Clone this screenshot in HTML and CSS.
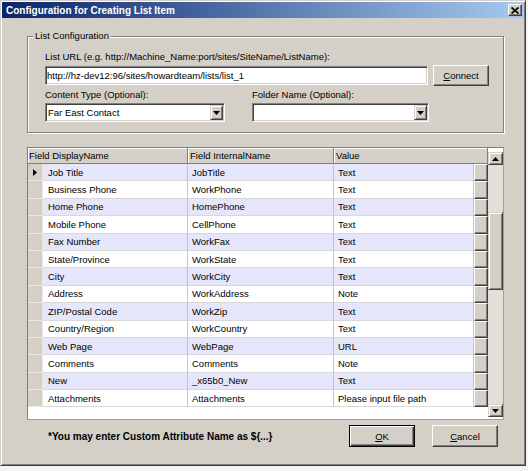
FILE: index.html
```html
<!DOCTYPE html>
<html lang="en">
<head>
    <meta charset="UTF-8">
    <meta name="viewport" content="width=device-width, initial-scale=1.0">
    <title>Configuration for Creating List Item</title>
    <link rel="stylesheet" href="styles.css">
</head>
<body>
    <div class="window">
        <div class="titlebar">
            <span class="title">Configuration for Creating List Item</span>
            <button class="close-btn">
                <svg width="8" height="7" viewBox="0 0 8 7"><path d="M0.5 0.5L7.5 6.5M7.5 0.5L0.5 6.5" stroke="#000" stroke-width="1.7"/></svg>
            </button>
        </div>

        <div class="client">
            <div class="group">
                <div class="group-title">List Configuration</div>
                <div class="label url-label">List URL (e.g. http://Machine_Name:port/sites/SiteName/ListName):</div>
                <div class="url-row">
                    <div class="textbox url-box">http://hz-dev12:96/sites/howardteam/lists/list_1</div>
                    <button class="btn connect-btn"><u>C</u>onnect</button>
                </div>
                <div class="combo-row">
                    <div class="combo-field content-type">
                        <div class="label">Content Type (Optional):</div>
                        <div class="combo">
                            <span class="combo-text">Far East Contact</span>
                            <span class="drop-btn"><svg width="7" height="4" viewBox="0 0 7 4"><path d="M0 0H7L3.5 4Z" fill="#000"/></svg></span>
                        </div>
                    </div>
                    <div class="combo-field folder-name">
                        <div class="label">Folder Name (Optional):</div>
                        <div class="combo">
                            <span class="combo-text"></span>
                            <span class="drop-btn"><svg width="7" height="4" viewBox="0 0 7 4"><path d="M0 0H7L3.5 4Z" fill="#000"/></svg></span>
                        </div>
                    </div>
                </div>
            </div>

            <div class="grid">
                <div class="grid-body">
                    <div class="grid-head">
                        <div class="head-cell">Field DisplayName</div>
                        <div class="head-cell">Field InternalName</div>
                        <div class="head-cell">Value</div>
                    </div>
                    <div class="grid-row alt">
                        <div class="row-head current"><svg width="4" height="7" viewBox="0 0 4 7"><path d="M0 0L4 3.5L0 7Z" fill="#000"/></svg></div>
                        <div class="cell name">Job Title</div><div class="cell">JobTitle</div><div class="cell">Text</div><div class="row-btn"></div>
                    </div>
                    <div class="grid-row">
                        <div class="row-head"></div>
                        <div class="cell name">Business Phone</div><div class="cell">WorkPhone</div><div class="cell">Text</div><div class="row-btn"></div>
                    </div>
                    <div class="grid-row alt">
                        <div class="row-head"></div>
                        <div class="cell name">Home Phone</div><div class="cell">HomePhone</div><div class="cell">Text</div><div class="row-btn"></div>
                    </div>
                    <div class="grid-row">
                        <div class="row-head"></div>
                        <div class="cell name">Mobile Phone</div><div class="cell">CellPhone</div><div class="cell">Text</div><div class="row-btn"></div>
                    </div>
                    <div class="grid-row alt">
                        <div class="row-head"></div>
                        <div class="cell name">Fax Number</div><div class="cell">WorkFax</div><div class="cell">Text</div><div class="row-btn"></div>
                    </div>
                    <div class="grid-row">
                        <div class="row-head"></div>
                        <div class="cell name">State/Province</div><div class="cell">WorkState</div><div class="cell">Text</div><div class="row-btn"></div>
                    </div>
                    <div class="grid-row alt">
                        <div class="row-head"></div>
                        <div class="cell name">City</div><div class="cell">WorkCity</div><div class="cell">Text</div><div class="row-btn"></div>
                    </div>
                    <div class="grid-row">
                        <div class="row-head"></div>
                        <div class="cell name">Address</div><div class="cell">WorkAddress</div><div class="cell">Note</div><div class="row-btn"></div>
                    </div>
                    <div class="grid-row alt">
                        <div class="row-head"></div>
                        <div class="cell name">ZIP/Postal Code</div><div class="cell">WorkZip</div><div class="cell">Text</div><div class="row-btn"></div>
                    </div>
                    <div class="grid-row">
                        <div class="row-head"></div>
                        <div class="cell name">Country/Region</div><div class="cell">WorkCountry</div><div class="cell">Text</div><div class="row-btn"></div>
                    </div>
                    <div class="grid-row alt">
                        <div class="row-head"></div>
                        <div class="cell name">Web Page</div><div class="cell">WebPage</div><div class="cell">URL</div><div class="row-btn"></div>
                    </div>
                    <div class="grid-row">
                        <div class="row-head"></div>
                        <div class="cell name">Comments</div><div class="cell">Comments</div><div class="cell">Note</div><div class="row-btn"></div>
                    </div>
                    <div class="grid-row alt">
                        <div class="row-head"></div>
                        <div class="cell name">New</div><div class="cell">_x65b0_New</div><div class="cell">Text</div><div class="row-btn"></div>
                    </div>
                    <div class="grid-row">
                        <div class="row-head"></div>
                        <div class="cell name">Attachments</div><div class="cell">Attachments</div><div class="cell">Please input file path</div><div class="row-btn"></div>
                    </div>
                </div>
                <div class="vscroll">
                    <div class="scroll-btn"><svg width="7" height="4" viewBox="0 0 7 4"><path d="M3.5 0L7 4H0Z" fill="#000"/></svg></div>
                    <div class="scroll-track"><div class="scroll-thumb"></div></div>
                    <div class="scroll-btn"><svg width="7" height="4" viewBox="0 0 7 4"><path d="M0 0H7L3.5 4Z" fill="#000"/></svg></div>
                </div>
            </div>

            <div class="footer">
                <span class="note">*You may enter Custom Attribute Name as ${...}</span>
                <button class="btn default-btn ok-btn"><u>O</u>K</button>
                <button class="btn cancel-btn"><u>C</u>ancel</button>
            </div>
        </div>
    </div>
</body>
</html>
```

FILE: styles.css
```css
body {
    margin: 0;
    background: #f4f4f4;
    font-family: "Liberation Sans", Arial, sans-serif;
    font-size: 9.5px;
    color: #000;
}
.window {
    width: 526px;
    height: 466px;
    box-sizing: border-box;
    background: #d4d0c8;
    border: 1px solid;
    border-color: #d4d0c8 #404040 #404040 #d4d0c8;
    box-shadow: inset 1px 1px #fff, inset -1px -1px #808080;
    padding: 1px;
}
.titlebar {
    height: 16px;
    display: flex;
    align-items: center;
    padding: 0 2px 0 4px;
    background: linear-gradient(to right, #0a246a, #a6caf0);
}
.title {
    flex: 1;
    color: #fff;
    font-weight: bold;
    font-size: 10px;
}
.close-btn {
    width: 14px;
    height: 12px;
    padding: 0;
    display: flex;
    align-items: center;
    justify-content: center;
    background: #d4d0c8;
    border: 1px solid;
    border-color: #fff #404040 #404040 #fff;
    box-shadow: inset -1px -1px #808080;
}

.group {
    margin: 18px 0 0 25px;
    width: 477px;
    height: 97px;
    box-sizing: border-box;
    border: 1px solid #808080;
    box-shadow: inset 1px 1px #fff, 1px 1px #fff;
    padding: 0 14px 0 17px;
}
.group-title {
    width: max-content;
    margin: -7px 0 0 -12px;
    padding: 0 2px;
    line-height: 12px;
    background: #d4d0c8;
}
.label {
    line-height: 12px;
    white-space: nowrap;
}
.url-label {
    margin-top: 9px;
}
.url-row {
    display: flex;
    align-items: center;
    height: 21px;
    margin-top: 2px;
}
.textbox {
    height: 19px;
    box-sizing: border-box;
    background: #fff;
    border: 1px solid;
    border-color: #808080 #fff #fff #808080;
    box-shadow: inset 1px 1px #404040, inset -1px -1px #d4d0c8;
    line-height: 17px;
    padding-left: 1px;
    white-space: nowrap;
}
.url-box {
    width: 384px;
}
.btn {
    font-family: inherit;
    font-size: inherit;
    color: #000;
    background: #d4d0c8;
    border: 1px solid;
    border-color: #fff #404040 #404040 #fff;
    box-shadow: inset -1px -1px #808080;
    padding: 0;
}
.connect-btn {
    width: 56px;
    height: 21px;
    margin-left: 5px;
}

.combo-row {
    display: flex;
    margin-top: 3px;
    gap: 27px;
}
.content-type {
    width: 180px;
}
.folder-name {
    width: 177px;
}
.combo {
    margin-top: 2px;
    height: 19px;
    box-sizing: border-box;
    display: flex;
    background: #fff;
    border: 1px solid;
    border-color: #808080 #fff #fff #808080;
    box-shadow: inset 1px 1px #404040, inset -1px -1px #d4d0c8;
    padding: 1px;
}
.combo-text {
    flex: 1;
    line-height: 15px;
    padding-left: 1px;
}
.drop-btn {
    width: 13px;
    box-sizing: border-box;
    display: flex;
    align-items: center;
    justify-content: center;
    background: #d4d0c8;
    border: 1px solid;
    border-color: #d4d0c8 #404040 #404040 #d4d0c8;
    box-shadow: inset 1px 1px #fff, inset -1px -1px #808080;
}

.grid {
    margin: 14px 0 0 25px;
    width: 477px;
    height: 273px;
    box-sizing: border-box;
    display: flex;
    background: #fff;
    border: 1px solid;
    border-color: #808080 #a0a0a0 #a0a0a0 #808080;
}
.grid-body {
    width: 460px;
}
.grid-head {
    display: grid;
    grid-template-columns: 160px 146px 154px;
    height: 16px;
}
.head-cell {
    background: #d4d0c8;
    border-right: 1px solid #808080;
    border-bottom: 1px solid #808080;
    box-shadow: inset 1px 1px #fff;
    padding-left: 2px;
    line-height: 15px;
}
.head-cell:first-child {
    padding-left: 1px;
}
.grid-row {
    display: grid;
    grid-template-columns: 15px 145px 146px 140px 14px;
    height: 17.4px;
}
.grid-row.alt .cell {
    background: #e6e6fa;
}
.row-head {
    background: #d4d0c8;
    border-bottom: 1px solid #ebe9e4;
    border-right: 1px solid #ebe9e4;
    display: flex;
    align-items: center;
    justify-content: center;
}
.cell {
    display: flex;
    align-items: center;
    padding-left: 4px;
    border-right: 1px solid #c4c4c4;
    border-bottom: 1px solid #d8d8d8;
    white-space: nowrap;
    overflow: hidden;
}
.cell.name {
    padding-left: 5px;
}
.row-btn {
    background: #d4d0c8;
    border: 1px solid;
    border-color: #fff #404040 #404040 #fff;
    box-shadow: inset -1px -1px #808080;
}

.vscroll {
    width: 15px;
    margin: 4px 0 2px;
    display: flex;
    flex-direction: column;
}
.scroll-btn {
    height: 13px;
    box-sizing: border-box;
    display: flex;
    align-items: center;
    justify-content: center;
    background: #d4d0c8;
    border: 1px solid;
    border-color: #d4d0c8 #404040 #404040 #d4d0c8;
    box-shadow: inset 1px 1px #fff, inset -1px -1px #808080;
}
.scroll-track {
    flex: 1;
    background: #e2dfd9;
}
.scroll-thumb {
    margin-top: 47px;
    height: 78px;
    box-sizing: border-box;
    background: #d4d0c8;
    border: 1px solid;
    border-color: #d4d0c8 #404040 #404040 #d4d0c8;
    box-shadow: inset 1px 1px #fff, inset -1px -1px #808080;
}

.footer {
    margin: 5px 0 0 25px;
    width: 477px;
    box-sizing: border-box;
    display: flex;
    align-items: center;
    padding: 0 6px 0 21px;
}
.note {
    flex: 1;
    font-weight: bold;
    font-size: 10px;
}
.ok-btn, .cancel-btn {
    width: 66px;
    height: 22px;
}
.ok-btn {
    margin-right: 17px;
}
.default-btn {
    border-color: #000;
    box-shadow: inset 1px 1px #fff, inset -1px -1px #404040, inset -2px -2px #808080;
}
```
